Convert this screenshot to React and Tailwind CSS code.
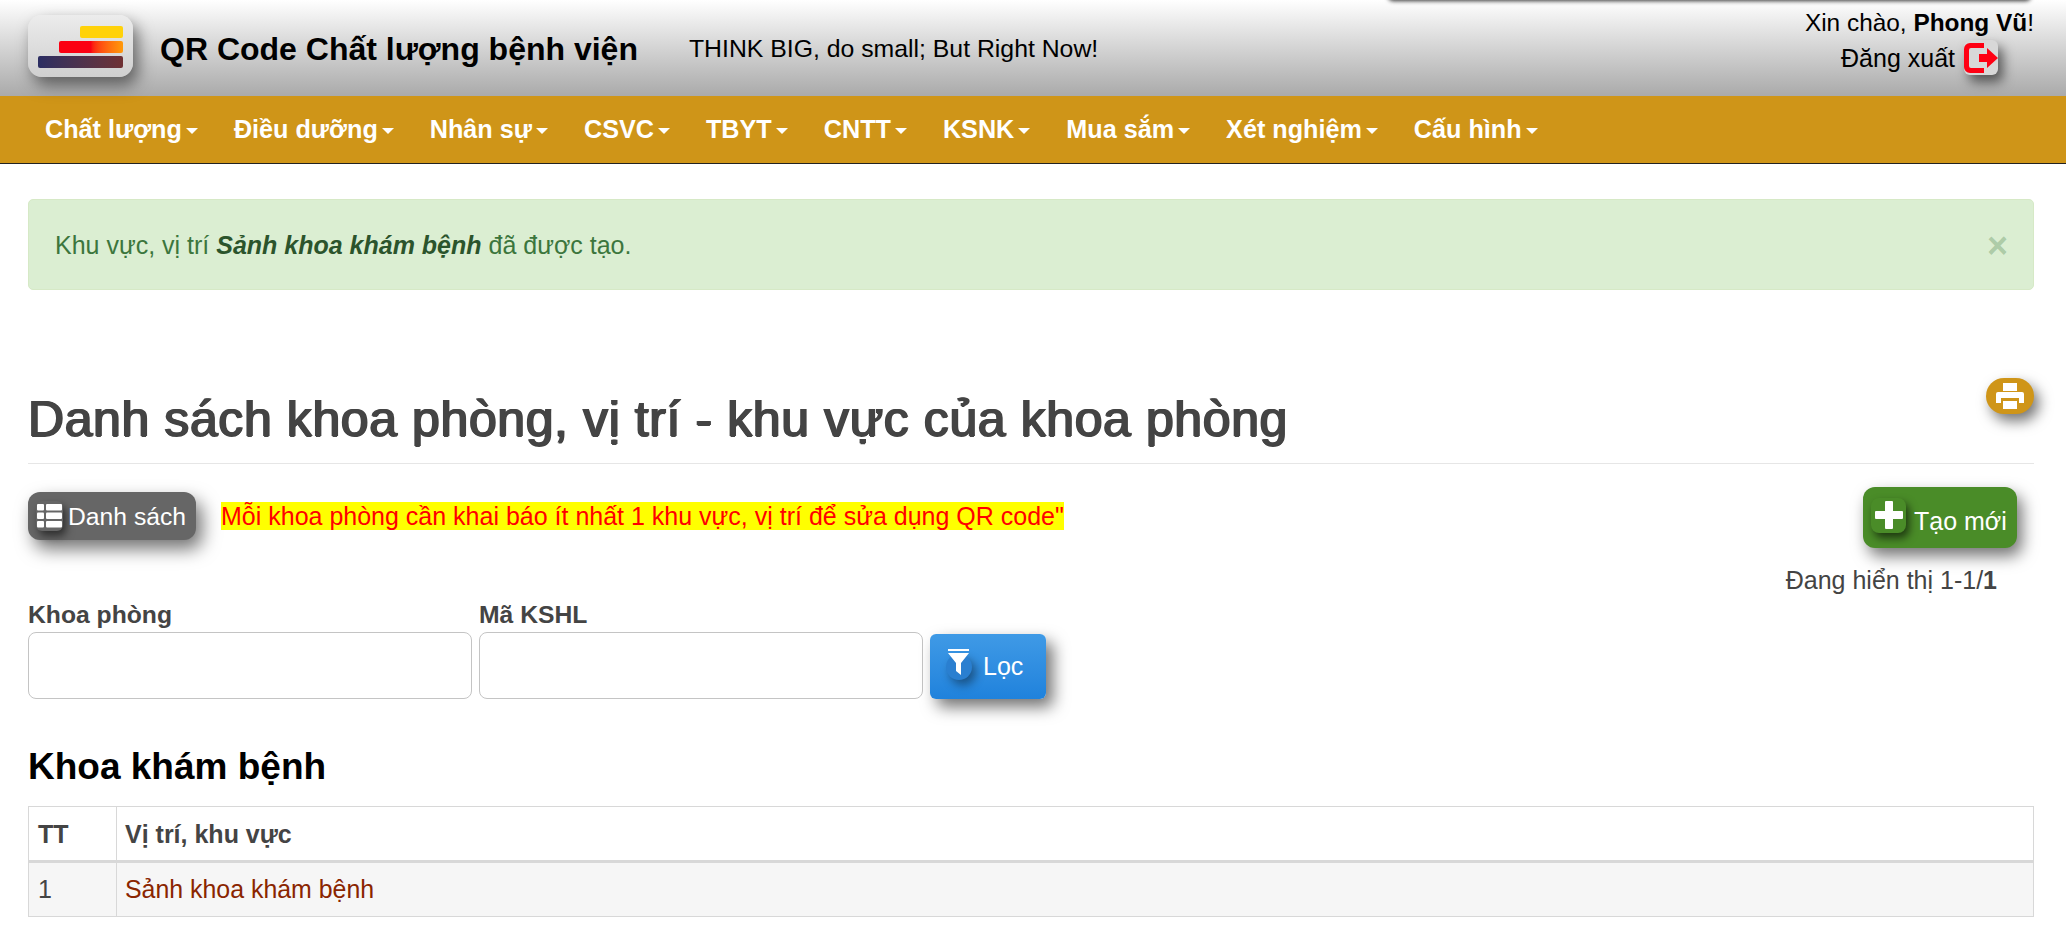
const menu = ['Chất lượng', 'Điều dưỡng', 'Nhân sự', 'CSVC', 'TBYT', 'CNTT', 'KSNK', 'Mua sắm', 'Xét nghiệm', 'Cấu hình'];

function Logo() {
  return (
    <div className="flex h-[62px] w-[105px] flex-col items-end gap-[3px] rounded-[14px] bg-gradient-to-b from-[#ececec] to-[#cfcfcf] pt-[11px] pr-[10px] shadow-[5px_8px_16px_rgba(0,0,0,0.5)]">
      <div className="h-[12px] w-[43px] rounded-[2px] bg-[#ffd20a]" />
      <div className="h-[12px] w-[64px] rounded-[2px] bg-gradient-to-r from-[#fb0012] via-[#fb0012] to-[#ff9a0a]" />
      <div className="h-[12px] w-[85px] rounded-[2px] bg-gradient-to-r from-[#2b2d62] to-[#6f3033]" />
    </div>
  );
}

function LogoutIcon() {
  return (
    <span className="ml-[9px] flex h-[35px] w-[34px] items-center justify-center rounded-[6px] bg-[#d8d8d8] shadow-[5px_7px_12px_rgba(0,0,0,0.55)]">
      <svg viewBox="0 0 34 30" className="h-[30px] w-[34px]" fill="#ff0013">
        <path d="M6 0h14v5H7a2 2 0 0 0-2 2v16a2 2 0 0 0 2 2h13v5H6a6 6 0 0 1-6-6V6a6 6 0 0 1 6-6z" />
        <path d="M15 11h8V5l11 10-11 10v-6h-8z" />
      </svg>
    </span>
  );
}

function PrintIcon() {
  return (
    <svg viewBox="0 0 28 26" className="h-[26px] w-[28px]" fill="#fff">
      <path d="M7 0h14v8H7z" />
      <path d="M2 9h24a2 2 0 0 1 2 2v9h-5v-5H5v5H0v-9a2 2 0 0 1 2-2z" />
      <path d="M7 18h14v8H7z" />
    </svg>
  );
}

function ListIcon() {
  return (
    <span className="flex h-[30px] w-[27px] items-center justify-center rounded-[6px] bg-[#666] shadow-[3px_5px_9px_rgba(0,0,0,0.55)]">
      <svg viewBox="0 0 25 24" className="h-[24px] w-[25px]" fill="#fff">
        <rect x="0" y="0" width="7" height="6.5" rx="1" />
        <rect x="9" y="0" width="16" height="6.5" rx="1" />
        <rect x="0" y="8.5" width="7" height="6.5" rx="1" />
        <rect x="9" y="8.5" width="16" height="6.5" rx="1" />
        <rect x="0" y="17" width="7" height="6.5" rx="1" />
        <rect x="9" y="17" width="16" height="6.5" rx="1" />
      </svg>
    </span>
  );
}

function PlusIcon() {
  return (
    <span className="mb-[5px] flex h-[35px] w-[35px] items-center justify-center rounded-[8px] bg-[#4a8c28] shadow-[3px_5px_9px_rgba(0,0,0,0.6)]">
      <svg viewBox="0 0 30 30" className="h-[30px] w-[30px]" fill="#fff">
        <path d="M11 2a1 1 0 0 1 1-1h6a1 1 0 0 1 1 1v9h9a1 1 0 0 1 1 1v6a1 1 0 0 1-1 1h-9v9a1 1 0 0 1-1 1h-6a1 1 0 0 1-1-1v-9H2a1 1 0 0 1-1-1v-6a1 1 0 0 1 1-1h9z" />
      </svg>
    </span>
  );
}

function FilterIcon() {
  return (
    <span className="relative flex h-[26px] w-[26px] items-center justify-center rounded-full bg-[#2a7fd0] shadow-[4px_5px_10px_rgba(0,0,0,0.4)]">
      <svg viewBox="0 0 22 26" className="absolute top-[-5px] left-[2px] h-[26px] w-[22px]" fill="#fff">
        <rect x="0" y="0" width="21" height="2" />
        <path d="M0 4h21l-8 10v12l-5-4v-8z" />
      </svg>
    </span>
  );
}

export default function App() {
  return (
    <div className="relative h-[944px] overflow-hidden bg-white font-['Liberation_Sans',Arial,sans-serif] text-[25px] text-[#444]">
      <div className="absolute top-[-10px] left-[1388px] h-[10px] w-[643px] rounded-[6px] shadow-[0_1px_4px_rgba(0,0,0,0.8)]" />

      <header className="flex h-[96px] items-start bg-gradient-to-b from-white to-[#aaaaaa] pr-[32px] pl-[28px] text-black">
        <div className="mt-[15px]">
          <Logo />
        </div>
        <div className="mt-[29px] ml-[27px] text-[32px] leading-[40px] font-bold">QR Code Chất lượng bệnh viện</div>
        <div className="mt-[34px] ml-[51px] text-[24.8px] leading-[30px]">THINK BIG, do small; But Right Now!</div>
        <div className="ml-auto flex flex-col items-end pt-[8px] text-[24.4px] leading-[30px]">
          <div>Xin chào, <b>Phong Vũ</b>!</div>
          <div className="mt-[2px] mr-[36px] flex items-center text-[25px]">
            Đăng xuất
            <LogoutIcon />
          </div>
        </div>
      </header>

      <nav className="flex h-[68px] items-center gap-[36px] border-b border-[#222] bg-[#cf9518] pl-[45px] text-[25.2px] text-white">
        {menu.map((item) => (
          <div key={item} className="flex items-center font-bold">
            {item}
            <span className="mt-[3px] ml-[4px] h-0 w-0 border-x-[6px] border-t-[6px] border-x-transparent border-t-white" />
          </div>
        ))}
      </nav>

      <main className="pr-[32px] pl-[28px]">
        <div className="mt-[35px] flex h-[91px] items-center justify-between rounded-[5px] border border-[#d6e9c6] bg-[#dbeed2] pt-[2px] pr-[25px] pl-[26px] text-[#3c763d]">
          <div>Khu vực, vị trí <b className="text-[#2b542c]"><i>Sảnh khoa khám bệnh</i></b> đã được tạo.</div>
          <span className="text-[36px] leading-none font-bold text-[#3c763d]/30">×</span>
        </div>

        <div className="relative mt-[100px] flex h-[74px] items-center border-b border-[#e6e6e6] pb-[16px]">
          <h1 className="text-[50px] leading-[58px] font-normal tracking-[0.59px] text-[#444] [text-shadow:1px_0_0_#444,-1px_0_0_#444,0_1px_0_#444]">Danh sách khoa phòng, vị trí - khu vực của khoa phòng</h1>
          <button className="absolute top-[-12px] right-0 flex h-[36px] w-[48px] items-center justify-center rounded-[18px] bg-[#cf9518] shadow-[5px_7px_14px_rgba(0,0,0,0.55)]">
            <PrintIcon />
          </button>
        </div>

        <div className="mt-[23px] flex items-start">
          <button className="mt-[5px] flex h-[48px] w-[168px] items-center gap-[5px] rounded-[12px] bg-[#666] pl-[8px] text-[24.7px] text-white shadow-[6px_9px_18px_rgba(0,0,0,0.55)]">
            <ListIcon />
            <span className="mt-[2px]">Danh sách</span>
          </button>
          <div className="mt-[15px] ml-[25px] bg-[#ffff00] leading-[28px] text-[#ff0000]">Mỗi khoa phòng cần khai báo ít nhất 1 khu vực, vị trí để sửa dụng QR code"</div>
          <button className="mr-[17px] ml-auto flex h-[61px] w-[154px] items-center gap-[8px] rounded-[12px] bg-[#4a8c28] pl-[8px] text-white shadow-[5px_8px_16px_rgba(0,0,0,0.55)]">
            <PlusIcon />
            <span className="mt-[8px]">Tạo mới</span>
          </button>
        </div>

        <div className="mt-[18px] mr-[37px] text-right leading-[28px]">Đang hiển thị 1-1/<b>1</b></div>

        <div className="mt-[7px] flex items-end">
          <label className="block w-[444px]">
            <div className="mb-[3px] text-[24.7px] leading-[28px] font-bold">Khoa phòng</div>
            <input className="block h-[67px] w-full rounded-[8px] border border-[#c4c4c4] bg-white" />
          </label>
          <label className="ml-[7px] block w-[444px]">
            <div className="mb-[3px] text-[24.7px] leading-[28px] font-bold">Mã KSHL</div>
            <input className="block h-[67px] w-full rounded-[8px] border border-[#c4c4c4] bg-white" />
          </label>
          <button className="ml-[7px] flex h-[65px] w-[116px] items-center gap-[11px] rounded-[6px] bg-gradient-to-b from-[#3f9ae6] to-[#1f82dc] pl-[16px] text-white shadow-[7px_8px_16px_rgba(0,0,0,0.55)]">
            <FilterIcon />
            Lọc
          </button>
        </div>

        <h2 className="mt-[46px] text-[37px] leading-[44px] font-bold text-black">Khoa khám bệnh</h2>

        <table className="mt-[17px] w-full border-collapse border border-[#d8d8d8]">
          <thead>
            <tr className="h-[55px] border-b-[3px] border-[#d8d8d8]">
              <th className="w-[88px] border border-b-[3px] border-[#d8d8d8] px-[9px] pt-[2px] text-left font-bold">TT</th>
              <th className="border border-b-[3px] border-[#d8d8d8] px-[8px] pt-[2px] text-left font-bold">Vị trí, khu vực</th>
            </tr>
          </thead>
          <tbody>
            <tr className="h-[55px] bg-[#f6f6f6]">
              <td className="border border-[#d8d8d8] px-[9px]">1</td>
              <td className="border border-[#d8d8d8] px-[8px] text-[24.9px] text-[#8a2500]">Sảnh khoa khám bệnh</td>
            </tr>
          </tbody>
        </table>
      </main>
    </div>
  );
}
